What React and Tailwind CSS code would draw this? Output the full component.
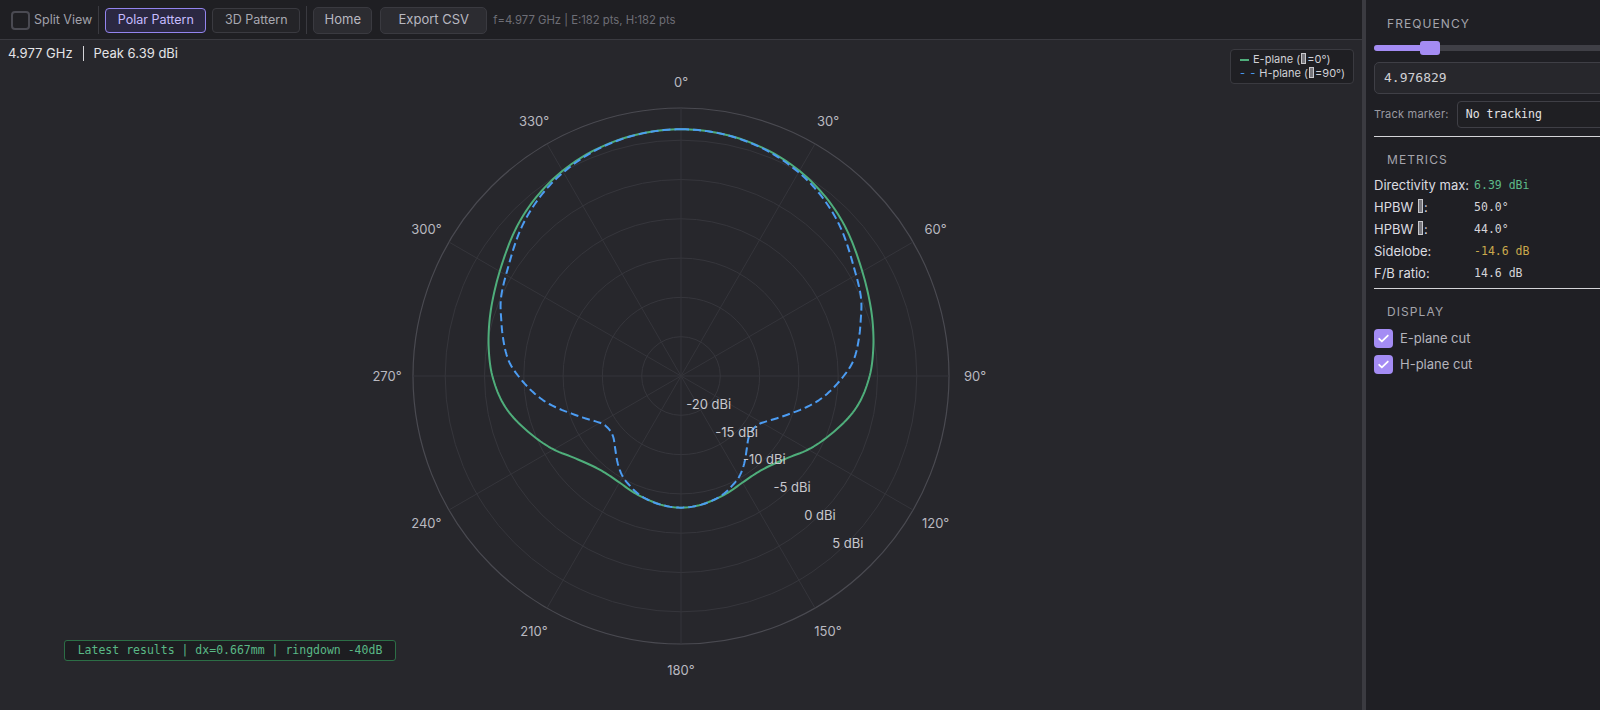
import React from "react";

const CX = 681;
const CY = 336;
const PX_PER_DB = 7.86;
const rOf = (db) => (db + 25) * PX_PER_DB;

const GREEN = [[0,6.39],[10,6.24],[20,5.82],[27,5.38],[35,4.68],[45,3.58],[57,1.98],[65,1.12],[74,0.35],[82,-0.3],[90,-1.0],[100,-2.3],[111,-4.5],[120,-6.3],[127,-7.8],[135,-8.9],[142,-9.35],[150,-9.35],[157,-9.05],[165,-8.7],[172,-8.4],[180,-8.25]];
const BLUE = [[0,6.39],[10,6.22],[20,5.75],[27,5.2],[35,4.4],[45,3.05],[57,1.1],[67,-0.1],[73,-1.1],[77,-1.7],[85,-3.0],[90,-4.3],[100,-7.2],[110,-10.6],[120,-13.1],[126,-13.6],[132,-13.4],[138,-12.5],[145,-11.1],[150,-10.2],[155,-9.6],[160,-9.05],[165,-8.7],[172,-8.4],[180,-8.25]];

function interp(table, t) {
  let i = 0;
  while (i < table.length - 2 && t > table[i + 1][0]) i++;
  const [x0, y0] = table[i];
  const [x1, y1] = table[i + 1];
  const slope = (k) => {
    if (k === 0 || k === table.length - 1) return 0;
    return (table[k + 1][1] - table[k - 1][1]) / (table[k + 1][0] - table[k - 1][0]);
  };
  const h = x1 - x0;
  const s = (t - x0) / h;
  const m0 = slope(i) * h;
  const m1 = slope(i + 1) * h;
  const h00 = 2 * s * s * s - 3 * s * s + 1;
  const h10 = s * s * s - 2 * s * s + s;
  const h01 = -2 * s * s * s + 3 * s * s;
  const h11 = s * s * s - s * s;
  return h00 * y0 + h10 * m0 + h01 * y1 + h11 * m1;
}

function pathFor(table) {
  const pts = [];
  for (let a = 0; a <= 360; a += 1) {
    const t = a <= 180 ? a : 360 - a;
    const db = interp(table, t);
    const r = rOf(db);
    const rad = (a * Math.PI) / 180;
    pts.push([CX + r * Math.sin(rad), CY - r * Math.cos(rad)]);
  }
  return "M" + pts.map((p) => p[0].toFixed(2) + "," + p[1].toFixed(2)).join("L") + "Z";
}

const greenPath = pathFor(GREEN);
const bluePath = pathFor(BLUE);

function Tofu({ h = "h-[11px]" }) {
  return (
    <span className={`inline-block w-[5px] ${h} align-[-1px] border border-[#c8c8cc] bg-[#77777d] mx-[1px]`} />
  );
}

function PolarChart() {
  const rings = [1, 2, 3, 4, 5, 6].map((k) => k * 39.3);
  const angles = [0, 30, 60, 90, 120, 150, 180, 210, 240, 270, 300, 330];
  const dbLabels = ["-20 dBi", "-15 dBi", "-10 dBi", "-5 dBi", "0 dBi", "5 dBi"];
  return (
    <svg className="w-full h-full block" viewBox="0 0 1362 671" width="1362" height="671">
      {rings.map((r, i) => (
        <circle key={i} cx={CX} cy={CY} r={r} fill="none" stroke="#36363c" strokeWidth="1" />
      ))}
      <circle cx={CX} cy={CY} r={268} fill="none" stroke="#4a4a51" strokeWidth="1.2" />
      {angles.map((a) => {
        const rad = (a * Math.PI) / 180;
        return (
          <line
            key={a}
            x1={CX}
            y1={CY}
            x2={CX + 268 * Math.sin(rad)}
            y2={CY - 268 * Math.cos(rad)}
            stroke="#35353b"
            strokeWidth="1"
          />
        );
      })}
      {angles.map((a) => {
        const rad = (a * Math.PI) / 180;
        return (
          <text
            key={"l" + a}
            x={CX + 294 * Math.sin(rad)}
            y={CY - 294 * Math.cos(rad)}
            textAnchor="middle"
            dominantBaseline="central"
            fill="#b9b9c0"
            fontSize="13"
            fontFamily="Inter, 'Liberation Sans', sans-serif"
          >
            {a}°
          </text>
        );
      })}
      <path d={greenPath} fill="none" stroke="#4fae7b" strokeWidth="2" strokeLinejoin="round" />
      <path d={bluePath} fill="none" stroke="#4c9cf2" strokeWidth="2" strokeDasharray="8 4" strokeLinejoin="round" />
      {dbLabels.map((t, i) => {
        const r = rings[i];
        return (
          <text
            key={t}
            x={CX + r * 0.7071}
            y={CY + r * 0.7071}
            textAnchor="middle"
            dominantBaseline="central"
            fill="#c8c8ce"
            fontSize="13"
            fontFamily="Inter, 'Liberation Sans', sans-serif"
          >
            {t}
          </text>
        );
      })}
    </svg>
  );
}

function Check() {
  return (
    <span className="w-[19px] h-[19px] rounded-[4px] bg-[#a48cf4] flex items-center justify-center">
      <svg width="13" height="13" viewBox="0 0 24 24" fill="none" stroke="white" strokeWidth="3.2" strokeLinecap="round" strokeLinejoin="round">
        <path d="M4 12.5l5 5L20 6.5" />
      </svg>
    </span>
  );
}

export default function App() {
  return (
    <div className="w-[1600px] h-[710px] overflow-hidden flex bg-[#27272c] text-[#e4e4e7]" style={{ fontFamily: "Inter, 'Liberation Sans', sans-serif" }}>
      <div className="w-[1362px] shrink-0 flex flex-col">
        <div className="h-[40px] shrink-0 flex items-center bg-[#1f1f23] border-b border-[#3a3a40] pl-[11px] pt-[1px]">
          <span className="w-[19px] h-[19px] rounded-[4px] border-2 border-[#4a4a52]" />
          <span className="ml-[4px] text-[12.5px] text-[#a1a1aa]">Split View</span>
          <span className="ml-[6px] w-px h-[28px] bg-[#3a3a40]" />
          <button className="ml-[6px] w-[101px] h-[25px] rounded-[4px] border border-[#9384ee] bg-[#2b2842] text-[12.5px] text-[#c7bcff]">Polar Pattern</button>
          <button className="ml-[6px] w-[88px] h-[25px] rounded-[4px] border border-[#3a3a40] bg-[#242428] text-[12.5px] text-[#a8a8b0]">3D Pattern</button>
          <span className="ml-[6px] w-px h-[28px] bg-[#3a3a40]" />
          <button className="ml-[6px] w-[59px] h-[27px] rounded-[5px] border border-[#3a3a40] bg-[#2c2c31] text-[13px] text-[#b8b8c0]">Home</button>
          <button className="ml-[8px] w-[107px] h-[27px] rounded-[5px] border border-[#3a3a40] bg-[#2c2c31] text-[13px] text-[#b8b8c0]">Export CSV</button>
          <span className="ml-[6px] text-[11.3px] text-[#6e6e76]">f=4.977 GHz | E:182 pts, H:182 pts</span>
        </div>
        <div className="relative flex-1">
          <PolarChart />
          <div className="absolute left-[8px] top-[4px] flex items-center text-[13px] text-[#e4e4e7]">
            <span>4.977 GHz</span>
            <span className="mx-[10px] w-px h-[15px] bg-[#d4d4d8]" />
            <span>Peak 6.39 dBi</span>
          </div>
          <div className="absolute right-[8px] top-[9px] w-[124px] h-[35px] rounded-[4px] border border-[#3a3a40] bg-[#1f1f23] pl-[9px] pt-[3px] text-[11px] leading-[13.5px] text-[#d0d0d6]">
            <div className="flex items-center">
              <span className="w-[9px] h-[1.5px] bg-[#4fae7b] mr-[4px]" />
              <span>E-plane (<Tofu />=0°)</span>
            </div>
            <div className="flex items-center">
              <span className="text-[#4c9cf2] mr-[3px] tracking-[1px]">- -</span>
              <span>H-plane (<Tofu />=90°)</span>
            </div>
          </div>
          <div className="absolute left-[64px] bottom-[50px] w-[332px] h-[21px] rounded-[3px] border border-[#2c6e46] bg-[#1d1d21] flex items-center justify-center text-[11.5px] text-[#5ab886]" style={{ fontFamily: "'DejaVu Sans Mono', monospace" }}>
            Latest results | dx=0.667mm | ringdown -40dB
          </div>
        </div>
      </div>
      <div className="w-[4px] shrink-0 bg-[#3b3b41]" />
      <div className="w-[300px] shrink-0 bg-[#1f1f24] pl-[8px] pt-[15px] flex flex-col">
        <div className="ml-[13px] h-[17px] leading-[17px] text-[12px] tracking-[0.09em] text-[#a4a4ac]">FREQUENCY</div>
        <div className="mt-[9px] h-[14px] relative flex items-center">
          <div className="w-full h-[6px] rounded-full bg-[#3f3f46]" />
          <div className="absolute left-0 top-[4px] w-[50px] h-[6px] rounded-l-full bg-[#a48cf4]" />
          <div className="absolute left-[46px] top-0 w-[20px] h-[14px] rounded-[3px] bg-[#a48cf4]" />
        </div>
        <div className="mt-[7px] h-[32px] rounded-[5px] border border-[#3f3f46] bg-[#27272c] flex items-center pl-[9px] text-[13px] text-[#d0d0d4]" style={{ fontFamily: "'DejaVu Sans Mono', monospace" }}>
          4.976829
        </div>
        <div className="mt-[7px] h-[27px] flex items-center">
          <span className="text-[11px] text-[#9a9aa2] tracking-[0.02em]">Track marker:</span>
          <div className="ml-[8px] flex-1 h-[27px] rounded-[4px] border border-[#3f3f46] bg-[#1f1f23] flex items-center pl-[8px] text-[11.5px] text-[#e4e4e7]" style={{ fontFamily: "'DejaVu Sans Mono', monospace" }}>
            No tracking
          </div>
        </div>
        <div className="mt-[8px] h-px bg-[#d4d4d8]" />
        <div className="mt-[14px] ml-[13px] h-[17px] leading-[17px] text-[12px] tracking-[0.09em] text-[#a4a4ac]">METRICS</div>
        <div className="mt-[7px] grid grid-cols-[auto_1fr] gap-x-[5px] text-[13px]">
          {[
            [<span key="a">Directivity max:</span>, "6.39 dBi", "text-[#5dba88]"],
            [<span key="b">HPBW <Tofu h="h-[14px]" />:</span>, "50.0°", "text-[#d4d4d8]"],
            [<span key="c">HPBW <Tofu h="h-[14px]" />:</span>, "44.0°", "text-[#d4d4d8]"],
            [<span key="d">Sidelobe:</span>, "-14.6 dB", "text-[#c9a84c]"],
            [<span key="e">F/B ratio:</span>, "14.6 dB", "text-[#d4d4d8]"],
          ].map(([label, val, cls], i) => (
            <React.Fragment key={i}>
              <div className="h-[22px] flex items-center text-[#dcdce0]">{label}</div>
              <div className={`h-[22px] flex items-center text-[11.5px] ${cls}`} style={{ fontFamily: "'DejaVu Sans Mono', monospace" }}>{val}</div>
            </React.Fragment>
          ))}
        </div>
        <div className="mt-[3px] h-px bg-[#d4d4d8]" />
        <div className="mt-[14px] ml-[13px] h-[17px] leading-[17px] text-[12px] tracking-[0.09em] text-[#a4a4ac]">DISPLAY</div>
        <div className="mt-[9px] flex items-center h-[19px]">
          <Check />
          <span className="ml-[7px] text-[13px] text-[#b4b4bc]">E-plane cut</span>
        </div>
        <div className="mt-[7px] flex items-center h-[19px]">
          <Check />
          <span className="ml-[7px] text-[13px] text-[#b4b4bc]">H-plane cut</span>
        </div>
      </div>
    </div>
  );
}
